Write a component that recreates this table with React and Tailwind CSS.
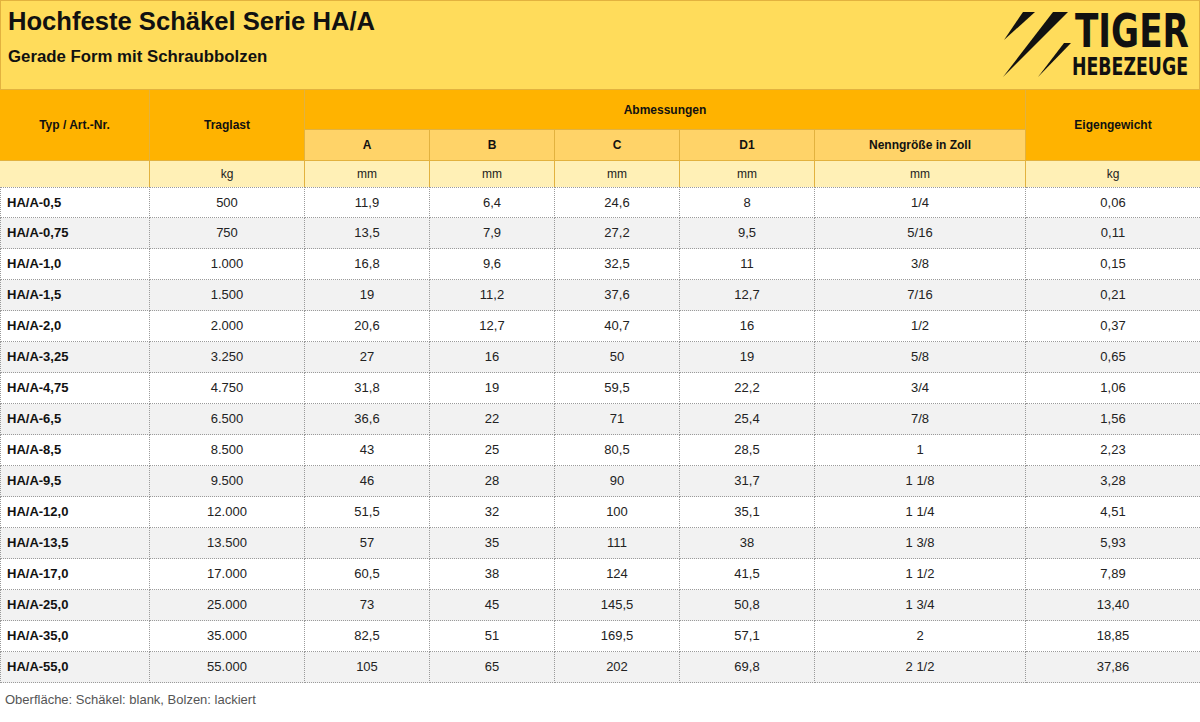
import React from "react";

const rows = [
  ["HA/A-0,5", "500", "11,9", "6,4", "24,6", "8", "1/4", "0,06"],
  ["HA/A-0,75", "750", "13,5", "7,9", "27,2", "9,5", "5/16", "0,11"],
  ["HA/A-1,0", "1.000", "16,8", "9,6", "32,5", "11", "3/8", "0,15"],
  ["HA/A-1,5", "1.500", "19", "11,2", "37,6", "12,7", "7/16", "0,21"],
  ["HA/A-2,0", "2.000", "20,6", "12,7", "40,7", "16", "1/2", "0,37"],
  ["HA/A-3,25", "3.250", "27", "16", "50", "19", "5/8", "0,65"],
  ["HA/A-4,75", "4.750", "31,8", "19", "59,5", "22,2", "3/4", "1,06"],
  ["HA/A-6,5", "6.500", "36,6", "22", "71", "25,4", "7/8", "1,56"],
  ["HA/A-8,5", "8.500", "43", "25", "80,5", "28,5", "1", "2,23"],
  ["HA/A-9,5", "9.500", "46", "28", "90", "31,7", "1 1/8", "3,28"],
  ["HA/A-12,0", "12.000", "51,5", "32", "100", "35,1", "1 1/4", "4,51"],
  ["HA/A-13,5", "13.500", "57", "35", "111", "38", "1 3/8", "5,93"],
  ["HA/A-17,0", "17.000", "60,5", "38", "124", "41,5", "1 1/2", "7,89"],
  ["HA/A-25,0", "25.000", "73", "45", "145,5", "50,8", "1 3/4", "13,40"],
  ["HA/A-35,0", "35.000", "82,5", "51", "169,5", "57,1", "2", "18,85"],
  ["HA/A-55,0", "55.000", "105", "65", "202", "69,8", "2 1/2", "37,86"],
];

const widths = [150, 155, 125, 125, 125, 135, 211, 174];

function Logo() {
  return (
    <svg width="195" height="77" viewBox="0 0 195 77" className="block">
      <polygon points="23,7 35,7 4,35" fill="#111" />
      <polygon points="53,7 68,7 3,72" fill="#111" />
      <polygon points="64,38 71,38 38,72" fill="#111" />
      <text
        x="75"
        y="42"
        textLength="114"
        lengthAdjust="spacingAndGlyphs"
        fontFamily="'DejaVu Sans Condensed', 'DejaVu Sans', sans-serif"
        fontWeight="bold"
        fontSize="47"
        fill="#111"
      >
        TIGER
      </text>
      <text
        x="72"
        y="70"
        textLength="116"
        lengthAdjust="spacingAndGlyphs"
        fontFamily="'DejaVu Sans Condensed', 'DejaVu Sans', sans-serif"
        fontWeight="bold"
        fontSize="25"
        fill="#111"
      >
        HEBEZEUGE
      </text>
    </svg>
  );
}

export default function App() {
  const gold = "border-[#e2b23f]";
  return (
    <div className="w-[1200px] h-[722px] bg-white font-['Liberation_Sans',Arial,sans-serif] text-[#111]">
      <div className={`h-[90px] border ${gold} bg-[#ffdc5b] flex justify-between pl-[7px] pr-[4px]`}>
        <div className="pt-[8px]">
          <div className="text-[25.6px] leading-none font-bold">Hochfeste Schäkel Serie HA/A</div>
          <div className="mt-[14px] text-[16.8px] leading-none font-bold">Gerade Form mit Schraubbolzen</div>
        </div>
        <div className="mt-[4px]">
          <Logo />
        </div>
      </div>

      <table className="table-fixed w-[1200px] border-separate border-spacing-0">
        <colgroup>
          {widths.map((w, i) => (
            <col key={i} style={{ width: w }} />
          ))}
        </colgroup>
        <thead>
          <tr className="h-[40px] bg-[#ffb300] text-[12px] font-bold">
            <th rowSpan={2} className={`border-r border-b ${gold} p-0 align-middle`}>Typ / Art.-Nr.</th>
            <th rowSpan={2} className={`border-r border-b ${gold} p-0 align-middle`}>Traglast</th>
            <th colSpan={5} className={`border-r border-b ${gold} p-0 align-middle`}>Abmessungen</th>
            <th rowSpan={2} className={`border-b ${gold} p-0 align-middle`}>Eigengewicht</th>
          </tr>
          <tr className="h-[31px] bg-[#ffd368] text-[12px] font-bold">
            {["A", "B", "C", "D1", "Nenngröße in Zoll"].map((t, i) => (
              <th key={i} className={`border-r border-b ${gold} p-0 align-middle`}>{t}</th>
            ))}
          </tr>
          <tr className="h-[26px] bg-[#fff0b6] text-[12px] font-normal">
            {["", "kg", "mm", "mm", "mm", "mm", "mm", "kg"].map((t, i) => (
              <td
                key={i}
                className={`${i < 7 ? `border-r ${gold}` : ""} p-0 text-center align-middle text-[#222]`}
              >
                {t}
              </td>
            ))}
          </tr>
        </thead>
        <tbody>
          {rows.map((r, ri) => (
            <tr key={ri} className={`h-[31px] ${ri % 2 === 1 ? "bg-[#f2f2f2]" : "bg-white"}`}>
              {r.map((c, ci) => (
                <td
                  key={ci}
                  className={`p-0 align-middle text-[13px] border-dotted border-[#9a9a9a] ${
                    ri === 0 ? "border-t" : ""
                  } border-b ${ci < 7 ? "border-r" : ""} ${
                    ci === 0 ? "border-l text-left pl-[6px] font-bold text-[#111]" : "text-center text-[#222]"
                  }`}
                >
                  {c}
                </td>
              ))}
            </tr>
          ))}
        </tbody>
      </table>
      <div className="pt-[9px] pl-[5px] text-[13px] leading-[15px] text-[#555]">
        Oberfläche: Schäkel: blank, Bolzen: lackiert
      </div>
    </div>
  );
}
